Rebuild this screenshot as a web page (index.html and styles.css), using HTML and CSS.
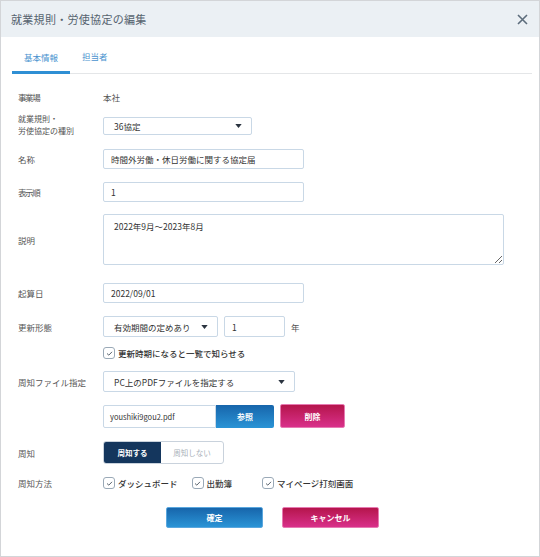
FILE: index.html
```html
<!DOCTYPE html>
<html lang="ja">
<head>
<meta charset="utf-8">
<link rel="stylesheet" href="styles.css">
</head>
<body>
<div class="dialog">
  <div class="header">
    <div class="title">就業規則・労使協定の編集</div>
    <svg class="close" width="11" height="11" viewBox="0 0 11 11"><path d="M1 1L10 10M10 1L1 10" stroke="#5d6d7c" stroke-width="1.6" fill="none"/></svg>
  </div>
  <div class="tabs">
    <div class="tab active">基本情報</div>
    <div class="tab">担当者</div>
  </div>
  <div class="form">
    <div class="row r-office">
      <div class="label narrow">事業場</div>
      <div class="value">本社</div>
    </div>
    <div class="row r-type">
      <div class="label two"><div>就業規則・</div><div>労使協定の種別</div></div>
      <div class="select w148 h18"><span>36協定</span><svg width="7" height="4" viewBox="0 0 8 5"><path d="M0 0H8L4 5Z" fill="#2b3440"/></svg></div>
    </div>
    <div class="row r-name">
      <div class="label">名称</div>
      <input class="input w200" value="時間外労働・休日労働に関する協定届">
    </div>
    <div class="row r-order">
      <div class="label narrow">表示順</div>
      <input class="input w200" value="1">
    </div>
    <div class="row r-desc">
      <div class="label">説明</div>
      <textarea class="textarea">2022年9月～2023年8月</textarea>
    </div>
    <div class="row r-start">
      <div class="label">起算日</div>
      <input class="input w200" value="2022/09/01">
    </div>
    <div class="row r-renew">
      <div class="label">更新形態</div>
      <div class="select w115 h21"><span>有効期間の定めあり</span><svg width="7" height="4" viewBox="0 0 8 5"><path d="M0 0H8L4 5Z" fill="#2b3440"/></svg></div>
      <input class="input w61 h21" value="1">
      <span class="unit">年</span>
    </div>
    <div class="row r-notify">
      <div class="label"></div>
      <label class="check"><span class="box"><svg width="7" height="5" viewBox="0 0 8 6"><path d="M1 3L3.2 5L7 1" stroke="#4a5560" stroke-width="1.1" fill="none"/></svg></span><span class="ctext">更新時期になると一覧で知らせる</span></label>
    </div>
    <div class="row r-file">
      <div class="label">周知ファイル指定</div>
      <div class="select w191 h21"><span>PC上のPDFファイルを指定する</span><svg width="7" height="4" viewBox="0 0 8 5"><path d="M0 0H8L4 5Z" fill="#2b3440"/></svg></div>
    </div>
    <div class="row r-upload">
      <div class="label"></div>
      <div class="filebox">youshiki9gou2.pdf</div>
      <div class="btn blue ref">参照</div>
      <div class="btn pink del">削除</div>
    </div>
    <div class="row r-announce">
      <div class="label">周知</div>
      <div class="toggle">
        <div class="opt on">周知する</div>
        <div class="opt">周知しない</div>
      </div>
    </div>
    <div class="row r-method">
      <div class="label">周知方法</div>
      <label class="check c1"><span class="box"><svg width="7" height="5" viewBox="0 0 8 6"><path d="M1 3L3.2 5L7 1" stroke="#4a5560" stroke-width="1.1" fill="none"/></svg></span><span class="ctext">ダッシュボード</span></label>
      <label class="check c2"><span class="box"><svg width="7" height="5" viewBox="0 0 8 6"><path d="M1 3L3.2 5L7 1" stroke="#4a5560" stroke-width="1.1" fill="none"/></svg></span><span class="ctext">出勤簿</span></label>
      <label class="check"><span class="box"><svg width="7" height="5" viewBox="0 0 8 6"><path d="M1 3L3.2 5L7 1" stroke="#4a5560" stroke-width="1.1" fill="none"/></svg></span><span class="ctext">マイページ打刻画面</span></label>
    </div>
    <div class="actions">
      <div class="btn blue big">確定</div>
      <div class="btn pink big">キャンセル</div>
    </div>
  </div>
</div>
</body>
</html>
```

FILE: styles.css
```css
* { box-sizing: border-box; }
html, body { margin: 0; padding: 0; background: #fff; }
body { font-family: "Noto Sans CJK JP", "Noto Sans", sans-serif; color: #444; }

.dialog {
  width: 540px;
  height: 557px;
  border: 1px solid #d3d5d8;
  background: #fff;
}

.header {
  height: 36px;
  background: #ebf0f4;
  display: flex;
  align-items: center;
  justify-content: space-between;
  padding: 0 11px 0 10px;
}
.title { font-size: 11px; color: #56636f; letter-spacing: 0.3px; }
.close { display: block; }

.tabs {
  margin: 0 7px 0 11px;
  height: 37px;
  display: flex;
  align-items: stretch;
  border-bottom: 1px solid #e4e6e8;
}
.tab {
  font-size: 8.5px;
  color: #4a93cf;
  display: flex;
  align-items: center;
  padding-top: 2px;
  margin-right: 24px;
}
.tab.active {
  width: 58px;
  justify-content: center;
  border-bottom: 3px solid #2f8fd4;
  padding-top: 5px;
  margin-bottom: -1px;
  margin-right: 12px;
}

.form { padding: 13px 0 0 17px; }
.row { display: flex; align-items: center; }
.label { width: 85px; flex: none; font-size: 8.5px; color: #555; line-height: 10px; }
.label.narrow { letter-spacing: -1.4px; }
.value { font-size: 8.5px; color: #555; }

.r-office { height: 20px; margin-bottom: 10px; }
.r-type { height: 18px; margin-bottom: 14px; }
.r-name { margin-bottom: 13px; }
.r-order { margin-bottom: 12px; }
.r-desc { margin-bottom: 18px; }
.r-start { margin-bottom: 13px; }
.r-renew { margin-bottom: 10px; }
.r-notify { margin-bottom: 12px; }
.r-file { margin-bottom: 12px; }
.r-upload { margin-bottom: 13px; }
.r-announce { margin-bottom: 13px; }
.r-method { margin-bottom: 18px; }

.label.two { font-size: 8px; line-height: 11.6px; margin-top: -2px; }

.input, .textarea, .select, .filebox {
  border: 1px solid #c9d8e6;
  border-radius: 2px;
  background: #fff;
  font-family: inherit;
  font-size: 8.5px;
  color: #333;
  outline: none;
}
.input { height: 20px; padding: 0 7px; margin: 0; }
.w200 { width: 201px; }
.w61 { width: 61px; margin-left: 6px; }
.unit { font-size: 8.5px; color: #555; margin-left: 6px; }

.textarea {
  width: 401px;
  height: 51px;
  padding: 5px 10px;
  line-height: 12px;
  resize: vertical;
  margin: 0;
  display: block;
}

.select {
  display: flex;
  align-items: center;
  justify-content: space-between;
  padding: 0 9px 0 10px;
}
.select svg { display: block; }
.w148 { width: 149px; }
.w115 { width: 115px; }
.w191 { width: 192px; }
.h18 { height: 18px; }
.h21 { height: 21px; }

.check { display: flex; align-items: center; }
.box {
  width: 12px;
  height: 12px;
  border: 1px solid #9aa9b7;
  border-radius: 3px;
  display: flex;
  align-items: center;
  justify-content: center;
  margin-right: 3px;
  background: #fff;
}
.box svg { display: block; }
.ctext { font-size: 8.5px; color: #333; font-weight: 500; }
.c1 { margin-right: 14px; }
.c2 { margin-right: 30px; }

.filebox {
  width: 113px;
  height: 23px;
  display: flex;
  align-items: center;
  padding: 0 6px;
  font-size: 7.5px;
  border-radius: 2px 0 0 2px;
}

.btn {
  display: flex;
  align-items: center;
  justify-content: center;
  color: #fff;
  font-size: 8px;
  font-weight: bold;
  border-radius: 2px;
}
.blue { background: linear-gradient(#1765ab, #2a94d6); }
.pink { background: linear-gradient(#b5154c, #d9308a); border: 1px solid #e77ab2; }
.ref { width: 58px; height: 23px; border-radius: 0 2px 2px 0; }
.del { width: 65px; height: 24px; margin-left: 6px; }

.toggle {
  display: flex;
  width: 121px;
  height: 23px;
  border: 1px solid #c9d2dc;
  border-radius: 3px;
  overflow: hidden;
}
.opt {
  flex: 1;
  display: flex;
  align-items: center;
  justify-content: center;
  font-size: 7.5px;
  color: #a9b1b9;
}
.opt.on { flex: none; width: 57px; background: #14365d; color: #fff; font-weight: bold; }

.actions {
  display: flex;
  padding-left: 148px;
  gap: 19px;
}
.big { width: 97px; height: 21px; font-size: 8px; }
.btn.pink.big { border: 1px solid #e77ab2; }
.btn.blue.big { border: 1px solid #5aa7de; }
```
